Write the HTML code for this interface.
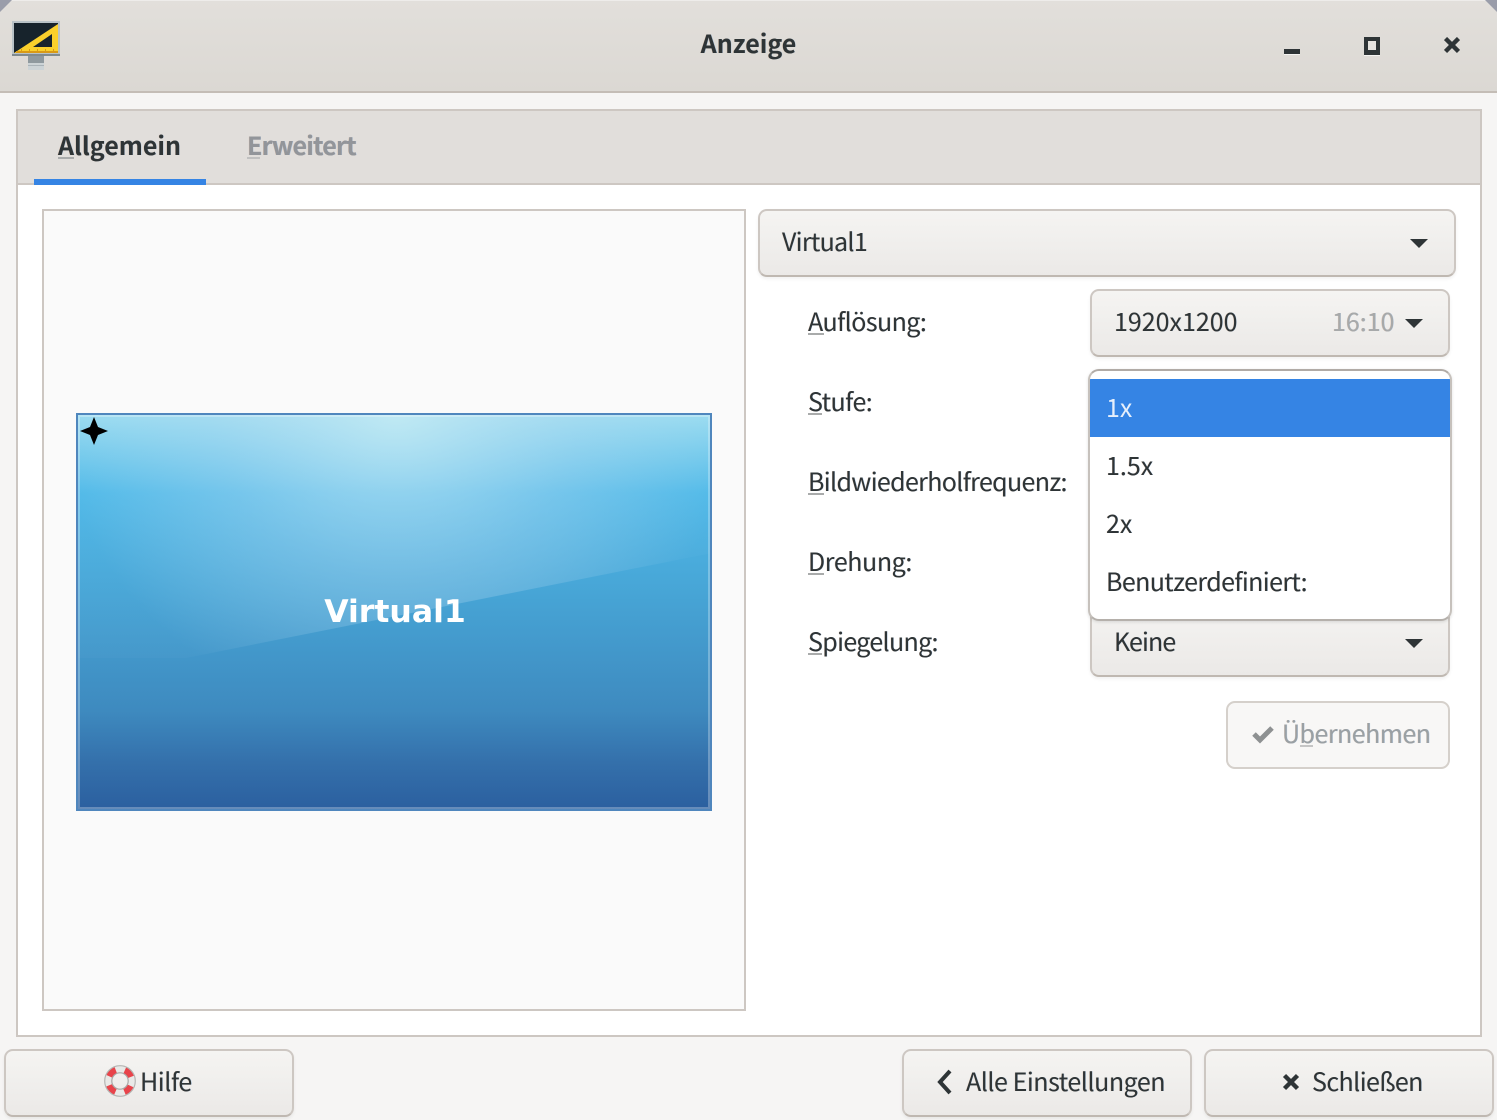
<!DOCTYPE html>
<html lang="de"><head><meta charset="utf-8"><title>Anzeige</title>
<style>
html,body{margin:0;padding:0;width:1497px;height:1120px;overflow:hidden;background:#f6f5f4}
body{position:relative;font-family:"Noto Sans CJK SC","Liberation Sans",sans-serif;font-size:25px;color:#2e3436}
.a{position:absolute;box-sizing:border-box}
.t{position:absolute;white-space:nowrap;line-height:30px;height:30px;letter-spacing:-.55px;filter:blur(.35px);text-shadow:-.4px 0 rgba(190,110,50,.3),.4px 0 rgba(50,130,220,.3)}
.b{font-weight:700;letter-spacing:0}
.u{position:absolute;height:2px;background:#a9abab}
.btn{position:absolute;box-sizing:border-box;border:2px solid #cdc7c2;border-bottom-color:#bfb8b1;border-radius:9px;background:linear-gradient(#f5f4f2,#ebe9e7);box-shadow:0 2px 3px rgba(0,0,0,.06)}
.arr{position:absolute;width:0;height:0;border-left:9.5px solid transparent;border-right:9.5px solid transparent;border-top:9px solid #2e3436}
</style></head><body>

<!-- header -->
<div class="a" style="left:0;top:0;width:1497px;height:93px;background:linear-gradient(#e2dfdb,#dbd8d3);border-top:1px solid #eeecea;border-bottom:2px solid #c4bdb6;border-radius:11px 11px 0 0"></div>
<div class="a" style="left:0;top:0;width:12px;height:12px;background:#9a9daa;clip-path:polygon(0 0,100% 0,0 100%)"></div>
<div class="a" style="left:1485px;top:0;width:12px;height:12px;background:#9a9daa;clip-path:polygon(0 0,100% 0,100% 100%)"></div>

<svg class="a" style="left:12px;top:21px" width="48" height="49" viewBox="0 0 48 49">
<rect width="48" height="35" fill="#b9c2c7"/>
<rect y="33" width="48" height="2" fill="#7f8a8f"/>
<rect x="2" y="2" width="44" height="30" fill="#17232c"/>
<path d="M2 32L46 3V32Z" fill="#fad02c"/>
<path d="M21 26L40 13V26Z" fill="#17232c"/>
<rect x="4" y="30" width="42" height="2" fill="#d99a16"/>
<path d="M9 28h1v2H9zM17 28h1v2h-1zM25 28h1v2h-1zM33 28h1v2h-1zM41 28h1v2h-1z" fill="#d99a16"/>
<rect x="16" y="35" width="16" height="7" fill="#8f999e"/>
<rect x="16" y="42" width="16" height="7" fill="#ccd3d6"/>
<rect x="16" y="44" width="16" height="1" fill="#aab3b8"/>
</svg>

<div class="t b" style="left:0;width:1497px;top:28px;text-align:center">Anzeige</div>

<!-- window controls -->
<div class="a" style="left:1284px;top:49px;width:16px;height:6px;background:#2e3436;border-bottom:1px solid #f4f3f1"></div>
<div class="a" style="left:1364px;top:37px;width:16px;height:18px;border:4px solid #2e3436;border-bottom-width:5px;background:#e5e3df;box-shadow:0 1px 0 #f4f3f1"></div>
<svg class="a" style="left:1444px;top:37px" width="16" height="17" viewBox="0 0 16 17"><path d="M1.5 1.5L14.5 14.5M14.5 1.5L1.5 14.5" stroke="#2e3436" stroke-width="4.4" fill="none"/></svg>

<!-- notebook -->
<div class="a" style="left:16px;top:109px;width:1466px;height:928px;border:2px solid #cdc7c2;background:#fff"></div>
<div class="a" style="left:18px;top:111px;width:1462px;height:74px;background:#e1dedb;border-bottom:2px solid #cdc7c2"></div>
<div class="a" style="left:34px;top:179px;width:172px;height:6px;background:#3584e4"></div>
<div class="t b" style="left:58px;top:130px">Allgemein</div>
<div class="u" style="left:58px;top:157px;width:16px"></div>
<div class="t b" style="left:247px;top:130px;color:#92959a;letter-spacing:-.8px">Erweitert</div>
<div class="u" style="left:247px;top:157px;width:13px;background:#c0c0c0"></div>

<!-- preview -->
<div class="a" style="left:42px;top:209px;width:704px;height:802px;border:2px solid #cdc7c2;background:#fafafa"></div>
<svg class="a" style="left:76px;top:413px" width="636" height="398" viewBox="0 0 636 398">
<defs>
<linearGradient id="bg" x1="0" y1="0" x2="0" y2="1">
<stop offset="0" stop-color="#9adcf0"/><stop offset=".2" stop-color="#4fb9e8"/><stop offset=".45" stop-color="#47a5d6"/><stop offset=".75" stop-color="#3e8abf"/><stop offset=".88" stop-color="#3470ab"/><stop offset="1" stop-color="#2b5f9f"/>
</linearGradient>
<radialGradient id="gl" gradientUnits="userSpaceOnUse" cx="320" cy="0" r="300" gradientTransform="translate(320 0) scale(1.12 1) translate(-320 0)">
<stop offset="0" stop-color="#cdeef5" stop-opacity=".75"/><stop offset=".55" stop-color="#b8dcf2" stop-opacity=".36"/><stop offset="1" stop-color="#b8dcf2" stop-opacity=".03"/>
</radialGradient>
<clipPath id="cp"><path d="M0 0H636V140L110 245L0 245Z"/></clipPath>
</defs>
<rect x="1" y="1" width="634" height="396" fill="url(#bg)"/>
<rect x="1" y="1" width="634" height="300" fill="url(#gl)" clip-path="url(#cp)"/>
<rect x="1" y="1" width="634" height="396" fill="none" stroke="#4f86bd" stroke-width="2"/>
<rect x="3" y="3" width="630" height="392" fill="none" stroke="#fff" stroke-opacity=".28" stroke-width="2"/>
<path d="M18 4L22 14L32 18L22 22L18 32L14 22L4 18L14 14Z" fill="#000"/>
</svg>
<div class="t" style="left:77px;width:636px;top:597px;text-align:center;font-family:'DejaVu Sans',sans-serif;font-weight:700;font-size:31.5px;letter-spacing:0;color:#fff;text-shadow:none">Virtual1</div>

<!-- right -->
<div class="btn" style="left:758px;top:209px;width:698px;height:68px"></div>
<div class="t" style="left:782px;top:226px;letter-spacing:-.7px">Virtual1</div>
<div class="arr" style="left:1410px;top:239px"></div>

<div class="t" style="left:808px;top:306px">Auflösung:</div><div class="u" style="left:808px;top:333px;width:16px"></div>
<div class="t" style="left:808px;top:386px">Stufe:</div><div class="u" style="left:808px;top:413px;width:14px"></div>
<div class="t" style="left:808px;top:466px;letter-spacing:-.65px">Bildwiederholfrequenz:</div><div class="u" style="left:808px;top:493px;width:16px"></div>
<div class="t" style="left:808px;top:546px;letter-spacing:-.4px">Drehung:</div><div class="u" style="left:808px;top:573px;width:16px"></div>
<div class="t" style="left:808px;top:626px;letter-spacing:-.65px">Spiegelung:</div><div class="u" style="left:808px;top:653px;width:14px"></div>

<div class="btn" style="left:1090px;top:289px;width:360px;height:68px"></div>
<div class="t" style="left:1114px;top:306px;letter-spacing:0">1920x1200</div>
<div class="t" style="left:1332px;top:306px;color:#a7a9aa;letter-spacing:0">16:10</div>
<div class="arr" style="left:1405px;top:319px"></div>

<div class="btn" style="left:1090px;top:600px;width:360px;height:77px"></div>
<div class="t" style="left:1114px;top:626px;letter-spacing:-.9px">Keine</div>
<div class="arr" style="left:1405px;top:639px"></div>

<!-- popup -->
<div class="a" style="left:1088px;top:369px;width:364px;height:252px;border:2px solid #c6c1bc;border-top-color:#b1aba6;border-bottom-color:#b5b0ab;border-radius:11px;background:#fff;overflow:hidden;box-shadow:0 1px 3px rgba(0,0,0,.12)">
<div class="a" style="left:0;top:8px;width:360px;height:58px;background:#3584e4"></div>
</div>
<div class="t" style="left:1106px;top:392px;color:#e6effb;text-shadow:none;letter-spacing:0">1x</div>
<div class="t" style="left:1106px;top:450px;letter-spacing:0">1.5x</div>
<div class="t" style="left:1106px;top:508px;letter-spacing:0">2x</div>
<div class="t" style="left:1106px;top:566px;letter-spacing:-.6px">Benutzerdefiniert:</div>

<!-- apply -->
<div class="a" style="left:1226px;top:701px;width:224px;height:68px;border:2px solid #d5d0cb;border-radius:9px;background:#f8f7f6"></div>
<svg class="a" style="left:1252px;top:724px" width="22" height="20" viewBox="0 0 22 20"><path d="M2 10L8 16L20 4" stroke="#8e9192" stroke-width="5" fill="none"/></svg>
<div class="t" style="left:1282px;top:718px;color:#9aa0a4;letter-spacing:-.5px">Übernehmen</div>
<div class="u" style="left:1300px;top:745px;width:13px;background:#c5c5c5"></div>

<!-- bottom -->
<div class="btn" style="left:4px;top:1049px;width:290px;height:68px"></div>
<svg class="a" style="left:104px;top:1065px" width="32" height="32" viewBox="0 0 32 32">
<circle cx="16" cy="16" r="12" fill="none" stroke="#e9e9e7" stroke-width="7"/>
<circle cx="16" cy="16" r="12" fill="none" stroke="#e8444b" stroke-width="7" stroke-dasharray="9.4 9.45" stroke-dashoffset="4.7" transform="rotate(45 16 16)"/>
<circle cx="16" cy="16" r="15.3" fill="none" stroke="#b5b5b3" stroke-width="1.2"/>
<circle cx="16" cy="16" r="8.2" fill="none" stroke="#a8a8a6" stroke-width="1.2"/>
</svg>
<div class="t" style="left:140px;top:1066px;letter-spacing:-.4px">Hilfe</div>

<div class="btn" style="left:902px;top:1049px;width:290px;height:68px"></div>
<svg class="a" style="left:936px;top:1068px" width="18" height="28" viewBox="0 0 18 28"><path d="M14 3L4 14L14 25" stroke="#2e3436" stroke-width="4" fill="none"/></svg>
<div class="t" style="left:966px;top:1066px;letter-spacing:-.45px">Alle Einstellungen</div>

<div class="btn" style="left:1204px;top:1049px;width:290px;height:68px"></div>
<svg class="a" style="left:1282px;top:1073px" width="18" height="18" viewBox="0 0 18 18"><path d="M2.5 2.5L15.5 15.5M15.5 2.5L2.5 15.5" stroke="#2e3436" stroke-width="4.4" fill="none"/></svg>
<div class="t" style="left:1312px;top:1066px">Schließen</div>

</body></html>
